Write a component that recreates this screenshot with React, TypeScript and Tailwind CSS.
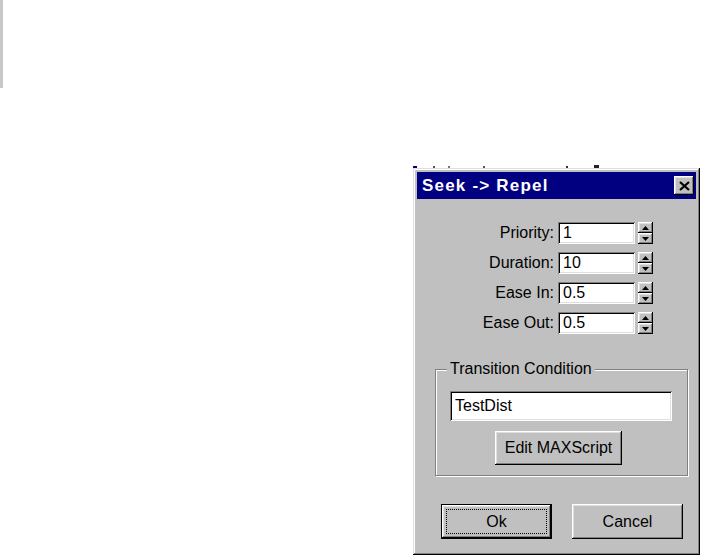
import React from 'react';

const frame =
  'shadow-[inset_-1px_-1px_0_#000,inset_1px_1px_0_#dfdfdf,inset_-2px_-2px_0_#808080,inset_2px_2px_0_#fff]';
const raised =
  'shadow-[inset_-1px_-1px_0_#000,inset_1px_1px_0_#fff,inset_-2px_-2px_0_#808080,inset_2px_2px_0_#dfdfdf]';
const sunken =
  'shadow-[inset_1px_1px_0_#808080,inset_-1px_-1px_0_#fff,inset_2px_2px_0_#000,inset_-2px_-2px_0_#dfdfdf]';

const Spinner: React.FC = () => (
  <div className="ml-[3px] flex h-[22px] w-[15px] flex-col">
    <div className={`flex h-[11px] items-center justify-center bg-[#c0c0c0] ${raised}`}>
      <svg width="7" height="4" viewBox="0 0 7 4">
        <path d="M3.5 0 L7 4 L0 4 Z" fill="#000" />
      </svg>
    </div>
    <div className={`flex h-[11px] items-center justify-center bg-[#c0c0c0] ${raised}`}>
      <svg width="7" height="4" viewBox="0 0 7 4">
        <path d="M0 0 L7 0 L3.5 4 Z" fill="#000" />
      </svg>
    </div>
  </div>
);

const Field: React.FC<{ label: string; value: string }> = ({ label, value }) => (
  <div className="flex h-[22px] items-center">
    <div className="w-[141px] pr-[4px] text-right">{label}</div>
    <div className={`flex h-[22px] w-[77px] items-center bg-white pl-[5px] ${sunken}`}>
      {value}
    </div>
    <Spinner />
  </div>
);

export default function App() {
  return (
    <div className="h-[557px] w-[712px] overflow-hidden bg-white font-['Liberation_Sans',Arial,sans-serif] text-[16px] leading-[18px] text-black">
      <div className="h-[88px] w-[3px] bg-[#c8c8c8]" />

      {/* bits of the window behind */}
      <div className="ml-[413px] mt-[75px] flex h-[5px] items-end">
        <span className="h-[2px] w-[4px] bg-[#000080]" />
        <span className="ml-[16px] h-[2px] w-[2px] bg-[#555]" />
        <span className="ml-[13px] h-[2px] w-[2px] bg-[#777]" />
        <span className="ml-[33px] h-[2px] w-[2px] bg-[#555]" />
        <span className="ml-[81px] h-[2px] w-[2px] bg-[#333]" />
        <span className="ml-[26px] h-[3px] w-[5px] bg-[#222]" />
      </div>

      <div className={`ml-[413px] flex h-[387px] w-[287px] flex-col bg-[#c0c0c0] p-[4px] ${frame}`}>
        <div className="flex h-[27px] items-center justify-between bg-[#000080] pl-[5px] pr-[2px]">
          <span className="text-[17px] font-bold tracking-[1.2px] text-white">Seek -&gt; Repel</span>
          <div className={`flex h-[19px] w-[20px] items-center justify-center bg-[#c0c0c0] ${raised}`}>
            <svg width="11" height="10" viewBox="0 0 11 10">
              <path d="M1 1 L10 9 M10 1 L1 9" stroke="#000" strokeWidth="2.2" />
            </svg>
          </div>
        </div>

        <div className="mt-[23px] flex flex-col gap-[8px]">
          <Field label="Priority:" value="1" />
          <Field label="Duration:" value="10" />
          <Field label="Ease In:" value="0.5" />
          <Field label="Ease Out:" value="0.5" />
        </div>

        <fieldset className="ml-[18px] mt-[26px] w-[253px] border border-[#808080] pb-[10px] shadow-[inset_1px_1px_0_#fff,1px_1px_0_#fff]">
          <legend className="ml-[11px] bg-[#c0c0c0] px-[3px]">Transition Condition</legend>
          <div className={`ml-[14px] mt-[13px] flex h-[30px] w-[222px] items-center bg-white pl-[5px] ${sunken}`}>
            TestDist
          </div>
          <div className={`ml-[59px] mt-[10px] flex h-[34px] w-[127px] items-center justify-center bg-[#c0c0c0] ${raised}`}>
            Edit MAXScript
          </div>
        </fieldset>

        <div className="mt-[28px] flex">
          <div className="ml-[24px] h-[35px] w-[111px] border border-black">
            <div className={`flex h-full w-full items-center justify-center p-[4px] ${raised}`}>
              <div className="flex h-full w-full items-center justify-center border border-dotted border-black">
                Ok
              </div>
            </div>
          </div>
          <div className={`ml-[20px] flex h-[35px] w-[111px] items-center justify-center ${raised}`}>
            Cancel
          </div>
        </div>
      </div>
    </div>
  );
}
